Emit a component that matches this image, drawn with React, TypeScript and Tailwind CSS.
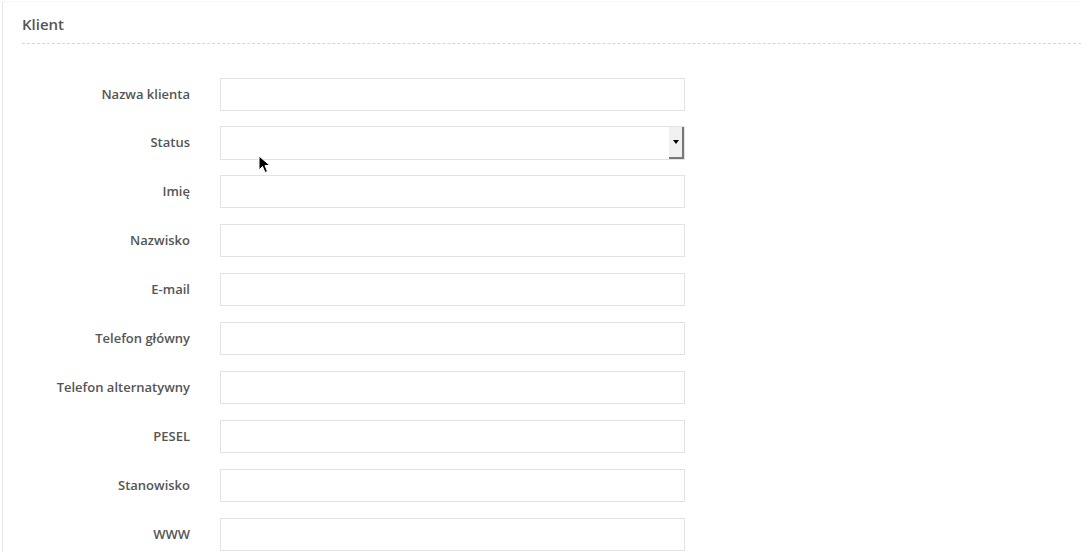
const fields = [
  "Nazwa klienta",
  "Status",
  "Imię",
  "Nazwisko",
  "E-mail",
  "Telefon główny",
  "Telefon alternatywny",
  "PESEL",
  "Stanowisko",
  "WWW",
];

function Cursor() {
  return (
    <svg
      className="absolute left-[258px] top-[155px]"
      width="14"
      height="20"
      viewBox="0 0 14 20"
    >
      <path
        d="M1 1 L1 15 L4.5 11.5 L7 17.5 L9.5 16.5 L7 10.5 L12 10.5 Z"
        fill="#000"
        stroke="#fff"
        strokeWidth="1"
      />
    </svg>
  );
}

export default function App() {
  return (
    <div
      className="relative h-[552px] w-[1081px] overflow-hidden bg-white"
      style={{ fontFamily: '"Open Sans", sans-serif' }}
    >
      <div className="ml-[2px] mt-[1px] h-full rounded-tl-[3px] border-l border-t border-l-[#e6e6e6] border-t-[#f6f6f6] pl-[19px]">
        <div className="flex h-[42px] items-center border-b border-dashed border-[#d6d6d6] pt-[3px]">
          <h2 className="text-[15px] font-semibold text-[#555]">Klient</h2>
        </div>
        <form className="mt-[34px] flex flex-col gap-4">
          {fields.map((label) =>
            label === "Status" ? (
              <div key={label} className="-my-px flex items-center">
                <label className="w-[168px] text-right text-[13px] font-semibold text-[#555]">
                  {label}
                </label>
                <div className="ml-[30px] flex h-[34px] w-[465px] items-stretch border border-[#e3e3e3] bg-white">
                  <div className="flex-1" />
                  <div className="flex w-[15px] items-center justify-center border-r-2 border-b-2 border-[#777] bg-[#f0f0f0]">
                    <span className="h-0 w-0 border-x-[3px] border-t-[4px] border-x-transparent border-t-black" />
                  </div>
                </div>
              </div>
            ) : (
              <div key={label} className="flex items-center">
                <label className="w-[168px] text-right text-[13px] font-semibold text-[#555]">
                  {label}
                </label>
                <input
                  className="ml-[30px] h-[33px] w-[465px] border border-[#e3e3e3] bg-white px-2 text-[13px] outline-none"
                  type="text"
                />
              </div>
            )
          )}
        </form>
      </div>
      <Cursor />
    </div>
  );
}
